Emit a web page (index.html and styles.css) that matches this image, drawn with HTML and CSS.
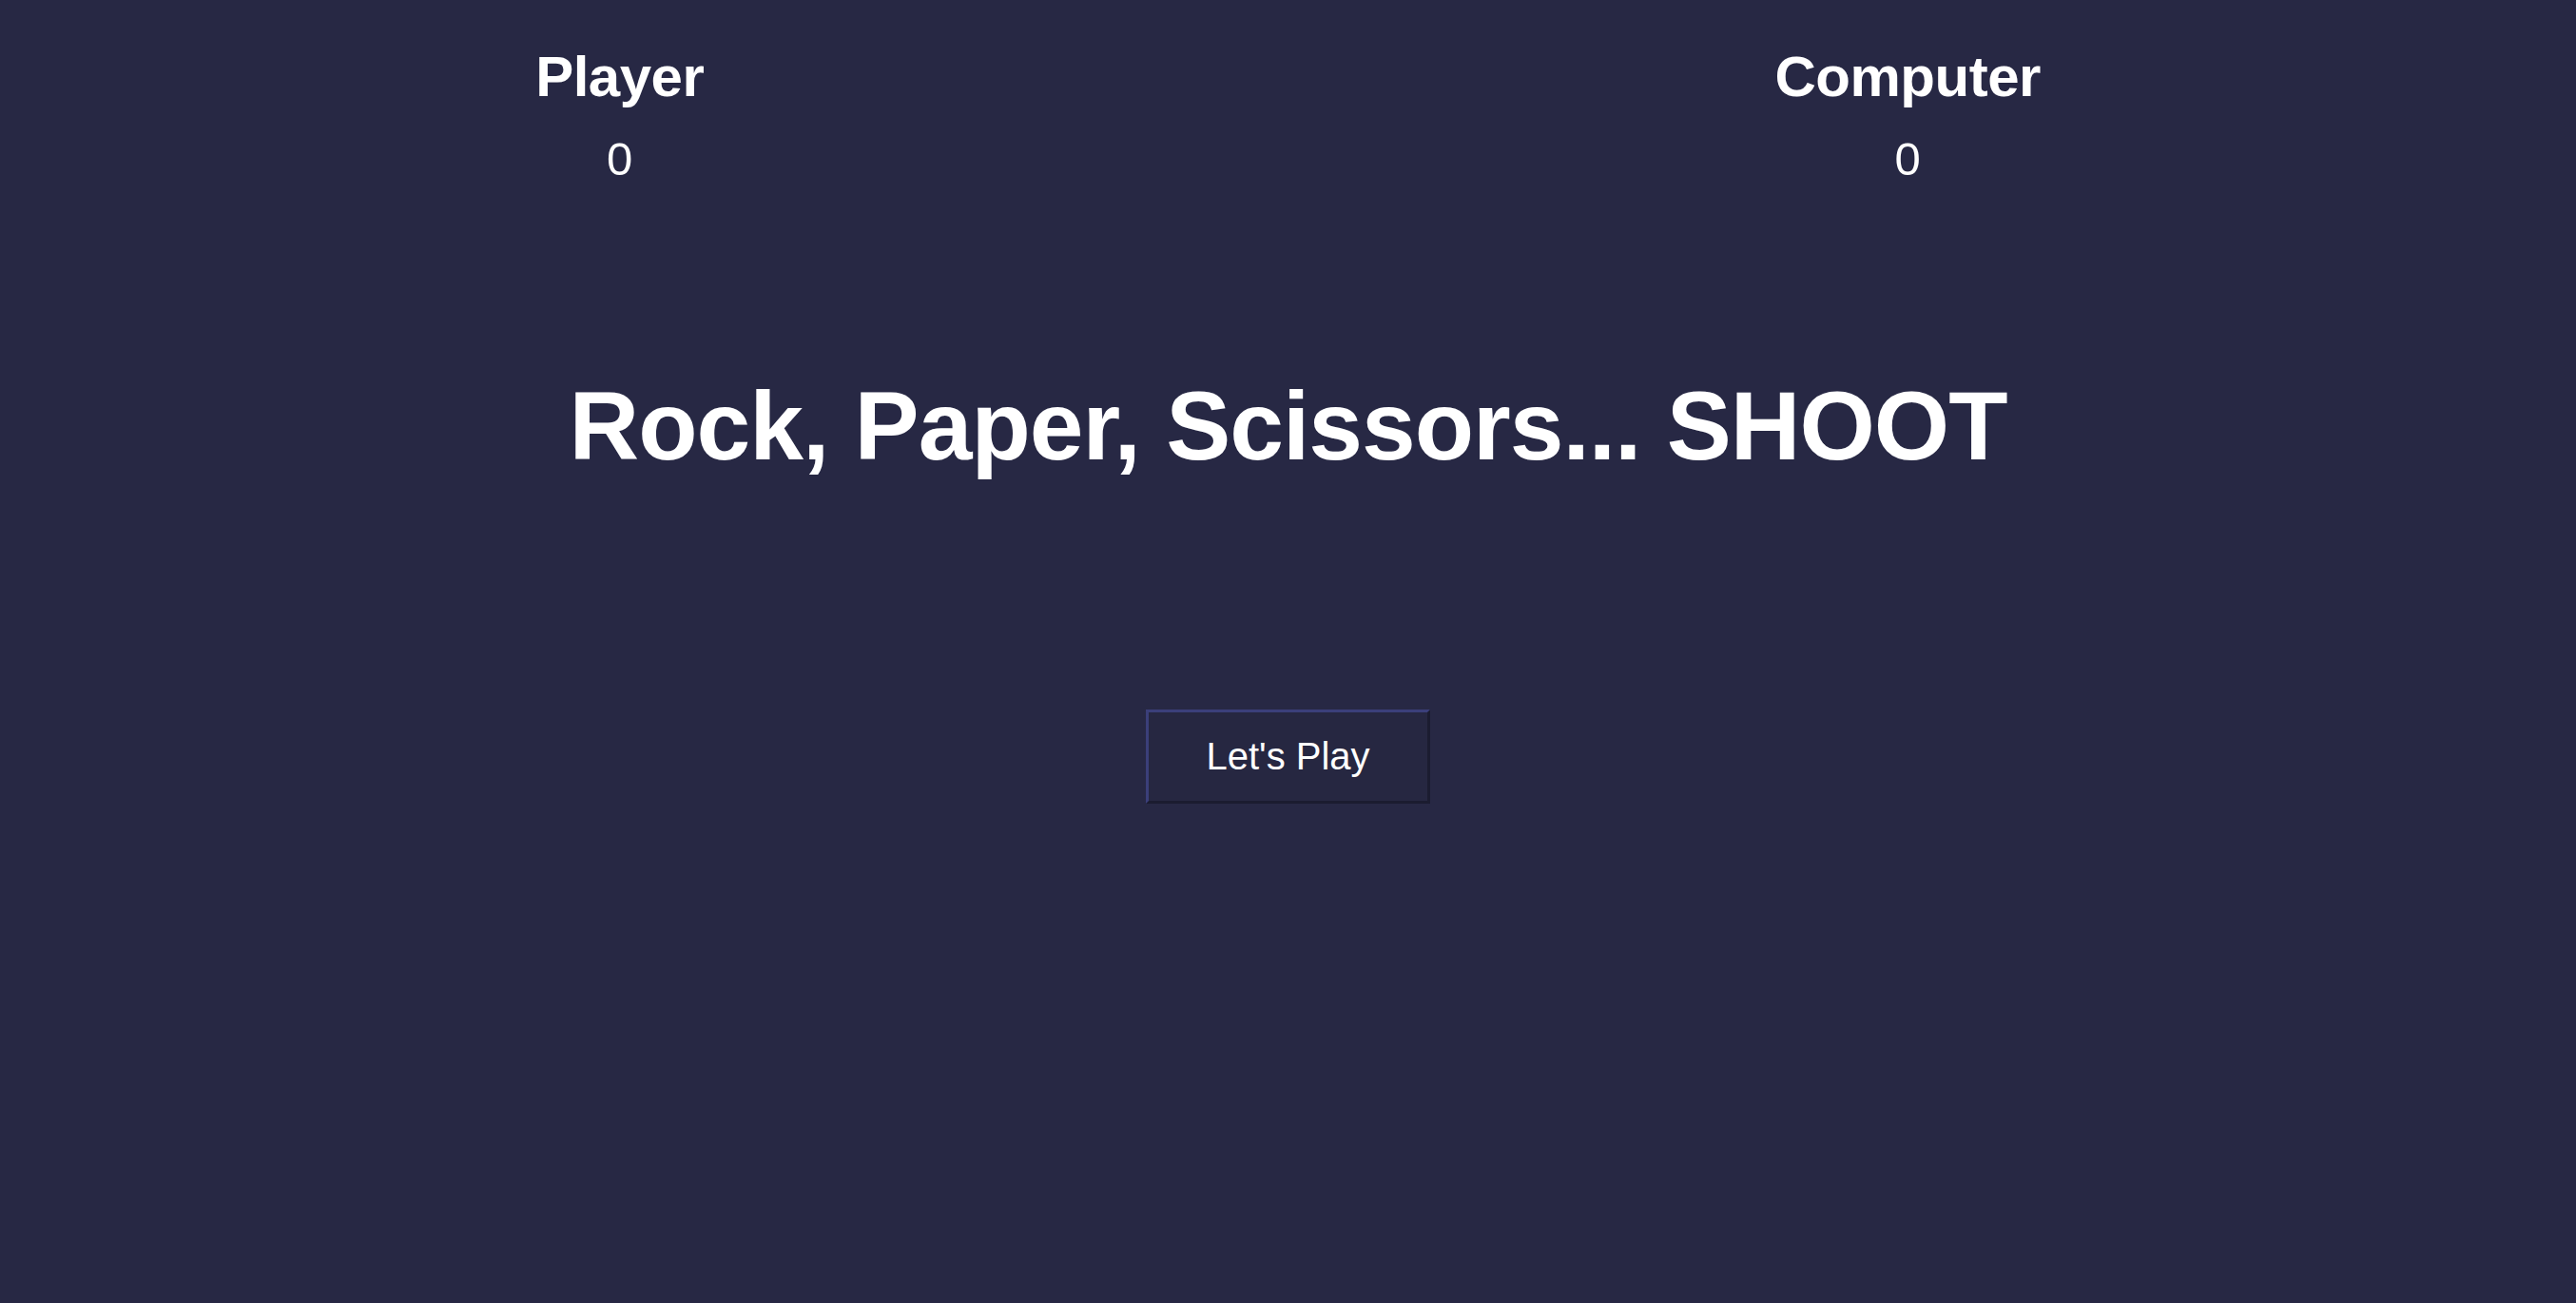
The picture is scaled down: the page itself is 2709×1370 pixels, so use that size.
FILE: index.html
```html
<!DOCTYPE html>
<html lang="en">
<head>
<meta charset="utf-8">
<title>Rock Paper Scissors</title>
<link rel="stylesheet" href="styles.css">
</head>
<body>
  <header class="scores">
    <div class="score">
      <h2 class="score-label">Player</h2>
      <p class="score-value">0</p>
    </div>
    <div class="score">
      <h2 class="score-label">Computer</h2>
      <p class="score-value">0</p>
    </div>
  </header>
  <main class="game">
    <h1 class="title">Rock, Paper, Scissors... SHOOT</h1>
    <button class="play-btn" type="button">Let's Play</button>
  </main>
</body>
</html>
```

FILE: styles.css
```css
html, body {
  margin: 0;
  padding: 0;
  height: 100%;
}

body {
  background: #272844;
  color: #ffffff;
  font-family: "Liberation Sans", Arial, Helvetica, sans-serif;
}

.scores {
  display: flex;
  justify-content: space-around;
  padding-top: 51px;
}

.score {
  display: flex;
  flex-direction: column;
  align-items: center;
}

.score-label {
  margin: 0;
  font-size: 60px;
  font-weight: 700;
  line-height: 1;
  letter-spacing: -0.5px;
}

.score-value {
  margin: 32px 0 0;
  font-size: 49px;
  line-height: 1;
}

.game {
  display: flex;
  flex-direction: column;
  align-items: center;
}

.title {
  margin: 205px 0 0;
  font-size: 102px;
  font-weight: 700;
  line-height: 1;
  letter-spacing: -1px;
}

.play-btn {
  margin-top: 247px;
  width: 299px;
  height: 99px;
  background: #262741;
  color: #ffffff;
  font-family: "Liberation Sans", Arial, Helvetica, sans-serif;
  font-size: 40px;
  border-width: 3px;
  border-style: solid;
  border-color: #3b3f7a #1b1c30 #1b1c30 #3b3f7a;
  cursor: pointer;
}
```
